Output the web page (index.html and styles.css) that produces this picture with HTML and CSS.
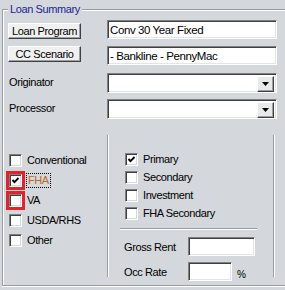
FILE: index.html
```html
<!DOCTYPE html>
<html lang="en">
  <head>
    <meta charset="UTF-8" />
    <meta name="viewport" content="width=device-width, initial-scale=1.0" />
    <title>Loan Summary</title>
    <link rel="stylesheet" href="styles.css">
  </head>
  <body>
    <fieldset class="group">
      <legend>Loan Summary</legend>

      <div class="row row-first">
        <button class="btn btn-low">Loan Program</button>
        <input class="field" type="text" value="Conv 30 Year Fixed" />
      </div>
      <div class="row">
        <button class="btn">CC Scenario</button>
        <input class="field" type="text" value="- Bankline - PennyMac" />
      </div>
      <div class="row row-combo">
        <span class="caption">Originator</span>
        <div class="combo">
          <span class="combo-btn">
            <svg width="7" height="4" viewBox="0 0 7 4"><polygon points="0,0 7,0 3.5,4" fill="#000" /></svg>
          </span>
        </div>
      </div>
      <div class="row">
        <span class="caption">Processor</span>
        <div class="combo">
          <span class="combo-btn">
            <svg width="7" height="4" viewBox="0 0 7 4"><polygon points="0,0 7,0 3.5,4" fill="#000" /></svg>
          </span>
        </div>
      </div>

      <div class="lower">
        <div class="types">
          <label class="opt"><span class="check"></span><span>Conventional</span></label>
          <label class="opt">
            <span class="check flag">
              <svg width="9" height="9" viewBox="0 0 9 9"><polyline points="1.5,4 3.5,6.2 7.5,2" fill="none" stroke="#000" stroke-width="1.9" /></svg>
            </span>
            <span class="focused">FHA</span>
          </label>
          <label class="opt"><span class="check flag"></span><span>VA</span></label>
          <label class="opt"><span class="check"></span><span>USDA/RHS</span></label>
          <label class="opt"><span class="check"></span><span>Other</span></label>
        </div>

        <div class="occupancy">
          <div class="occ-list">
            <label class="opt opt-tight">
              <span class="check">
                <svg width="9" height="9" viewBox="0 0 9 9"><polyline points="1.5,4 3.5,6.2 7.5,2" fill="none" stroke="#000" stroke-width="1.9" /></svg>
              </span>
              <span>Primary</span>
            </label>
            <label class="opt opt-tight"><span class="check"></span><span>Secondary</span></label>
            <label class="opt opt-tight"><span class="check"></span><span>Investment</span></label>
            <label class="opt opt-tight"><span class="check"></span><span>FHA Secondary</span></label>
          </div>
          <div class="rule"></div>
          <div class="kv kv-first">
            <span class="kv-label">Gross Rent</span>
            <input class="field field-sm" type="text" value="" />
          </div>
          <div class="kv">
            <span class="kv-label">Occ Rate</span>
            <input class="field field-xs" type="text" value="" />
            <span class="unit">%</span>
          </div>
        </div>
      </div>
    </fieldset>
  </body>
</html>
```

FILE: styles.css
```css
body {
  margin: 0;
  width: 285px;
  height: 290px;
  overflow: hidden;
  background: #d4d7db;
  font-family: "Liberation Sans", Arial, sans-serif;
  font-size: 11px;
  letter-spacing: -0.4px;
  color: #000;
}
.group {
  box-sizing: border-box;
  margin: 2px 0 0 2px;
  padding: 4px 0 0 5px;
  width: 283px;
  height: 284px;
  min-width: 0;
  border: 1px solid #999da2;
  border-right: 0;
  box-shadow: inset 1px 1px 0 #fff, 0 1px 0 #fff;
}
.group legend {
  padding: 0 2px;
  line-height: 14px;
  color: #1c2590;
  background: #d4d7db;
}
.row {
  display: grid;
  grid-template-columns: 99px 170px;
  align-items: start;
  height: 19px;
  margin-top: 7px;
}
.row-first {
  margin-top: 0;
}
.row-combo {
  margin-top: 8px;
}
.btn {
  box-sizing: border-box;
  width: 73px;
  height: 16px;
  padding: 0;
  font: inherit;
  letter-spacing: inherit;
  line-height: 13px;
  color: #000;
  background: #f0f0f0;
  border: 1px solid;
  border-color: #fff #404040 #404040 #fff;
  box-shadow: inset -1px -1px 0 #a0a0a0;
}
.btn-low {
  margin-top: 3px;
}
.field {
  box-sizing: border-box;
  width: 170px;
  height: 19px;
  margin: 0;
  padding: 0 2px;
  font: inherit;
  font-size: 11.5px;
  letter-spacing: -0.4px;
  color: #000;
  background: #fff;
  border: 1px solid;
  border-color: #808080 #fff #fff #808080;
  box-shadow: inset 1px 1px 0 #404040, inset -1px -1px 0 #e4e4e4;
  outline: none;
}
.caption {
  padding-left: 1px;
  line-height: 19px;
}
.combo {
  box-sizing: border-box;
  display: flex;
  justify-content: flex-end;
  width: 170px;
  height: 20px;
  padding: 2px;
  background: #fff;
  border: 1px solid;
  border-color: #808080 #fff #fff #808080;
  box-shadow: inset 1px 1px 0 #404040, inset -1px -1px 0 #e4e4e4;
}
.combo-btn {
  box-sizing: border-box;
  display: flex;
  align-items: center;
  justify-content: center;
  width: 17px;
  height: 16px;
  background: #e8e9eb;
  border: 1px solid;
  border-color: #fff #404040 #404040 #fff;
  box-shadow: inset -1px -1px 0 #a0a0a0;
}
.lower {
  display: flex;
  height: 142px;
  margin-top: 17px;
}
.types {
  box-sizing: border-box;
  width: 99px;
  padding-top: 15px;
}
.opt {
  display: flex;
  align-items: center;
  gap: 5px;
  height: 20px;
  padding-left: 1px;
}
.opt-tight {
  height: 18px;
}
.check {
  box-sizing: border-box;
  display: flex;
  align-items: center;
  justify-content: center;
  flex: none;
  width: 13px;
  height: 13px;
  background: #fff;
  border: 1px solid;
  border-color: #808080 #fff #fff #808080;
  box-shadow: inset 1px 1px 0 #404040, inset -1px -1px 0 #d4d7db;
}
.flag {
  outline: 3px solid #e3232b;
}
.focused {
  margin-left: -1px;
  padding: 0 1px;
  line-height: 13px;
  color: #bb6a2e;
  border: 1px dotted #000;
}
.occupancy {
  box-sizing: border-box;
  width: 167px;
  border-left: 1px solid #999da2;
  border-right: 1px solid #999da2;
  box-shadow: inset 1px 0 0 #fff, 1px 0 0 #fff;
}
.occ-list {
  padding: 15px 0 0 16px;
}
.rule {
  width: 137px;
  height: 1px;
  margin: 6px 0 0 12px;
  background: #999da2;
  box-shadow: 0 1px 0 #fff;
}
.kv {
  display: flex;
  align-items: center;
  height: 19px;
  margin-top: 6px;
  padding-left: 16px;
}
.kv-first {
  margin-top: 8px;
}
.kv-label {
  width: 64px;
}
.field-sm {
  width: 67px;
}
.field-xs {
  width: 44px;
}
.unit {
  align-self: flex-end;
  margin: 0 0 1px 5px;
  font-size: 10px;
  line-height: 11px;
}
```
